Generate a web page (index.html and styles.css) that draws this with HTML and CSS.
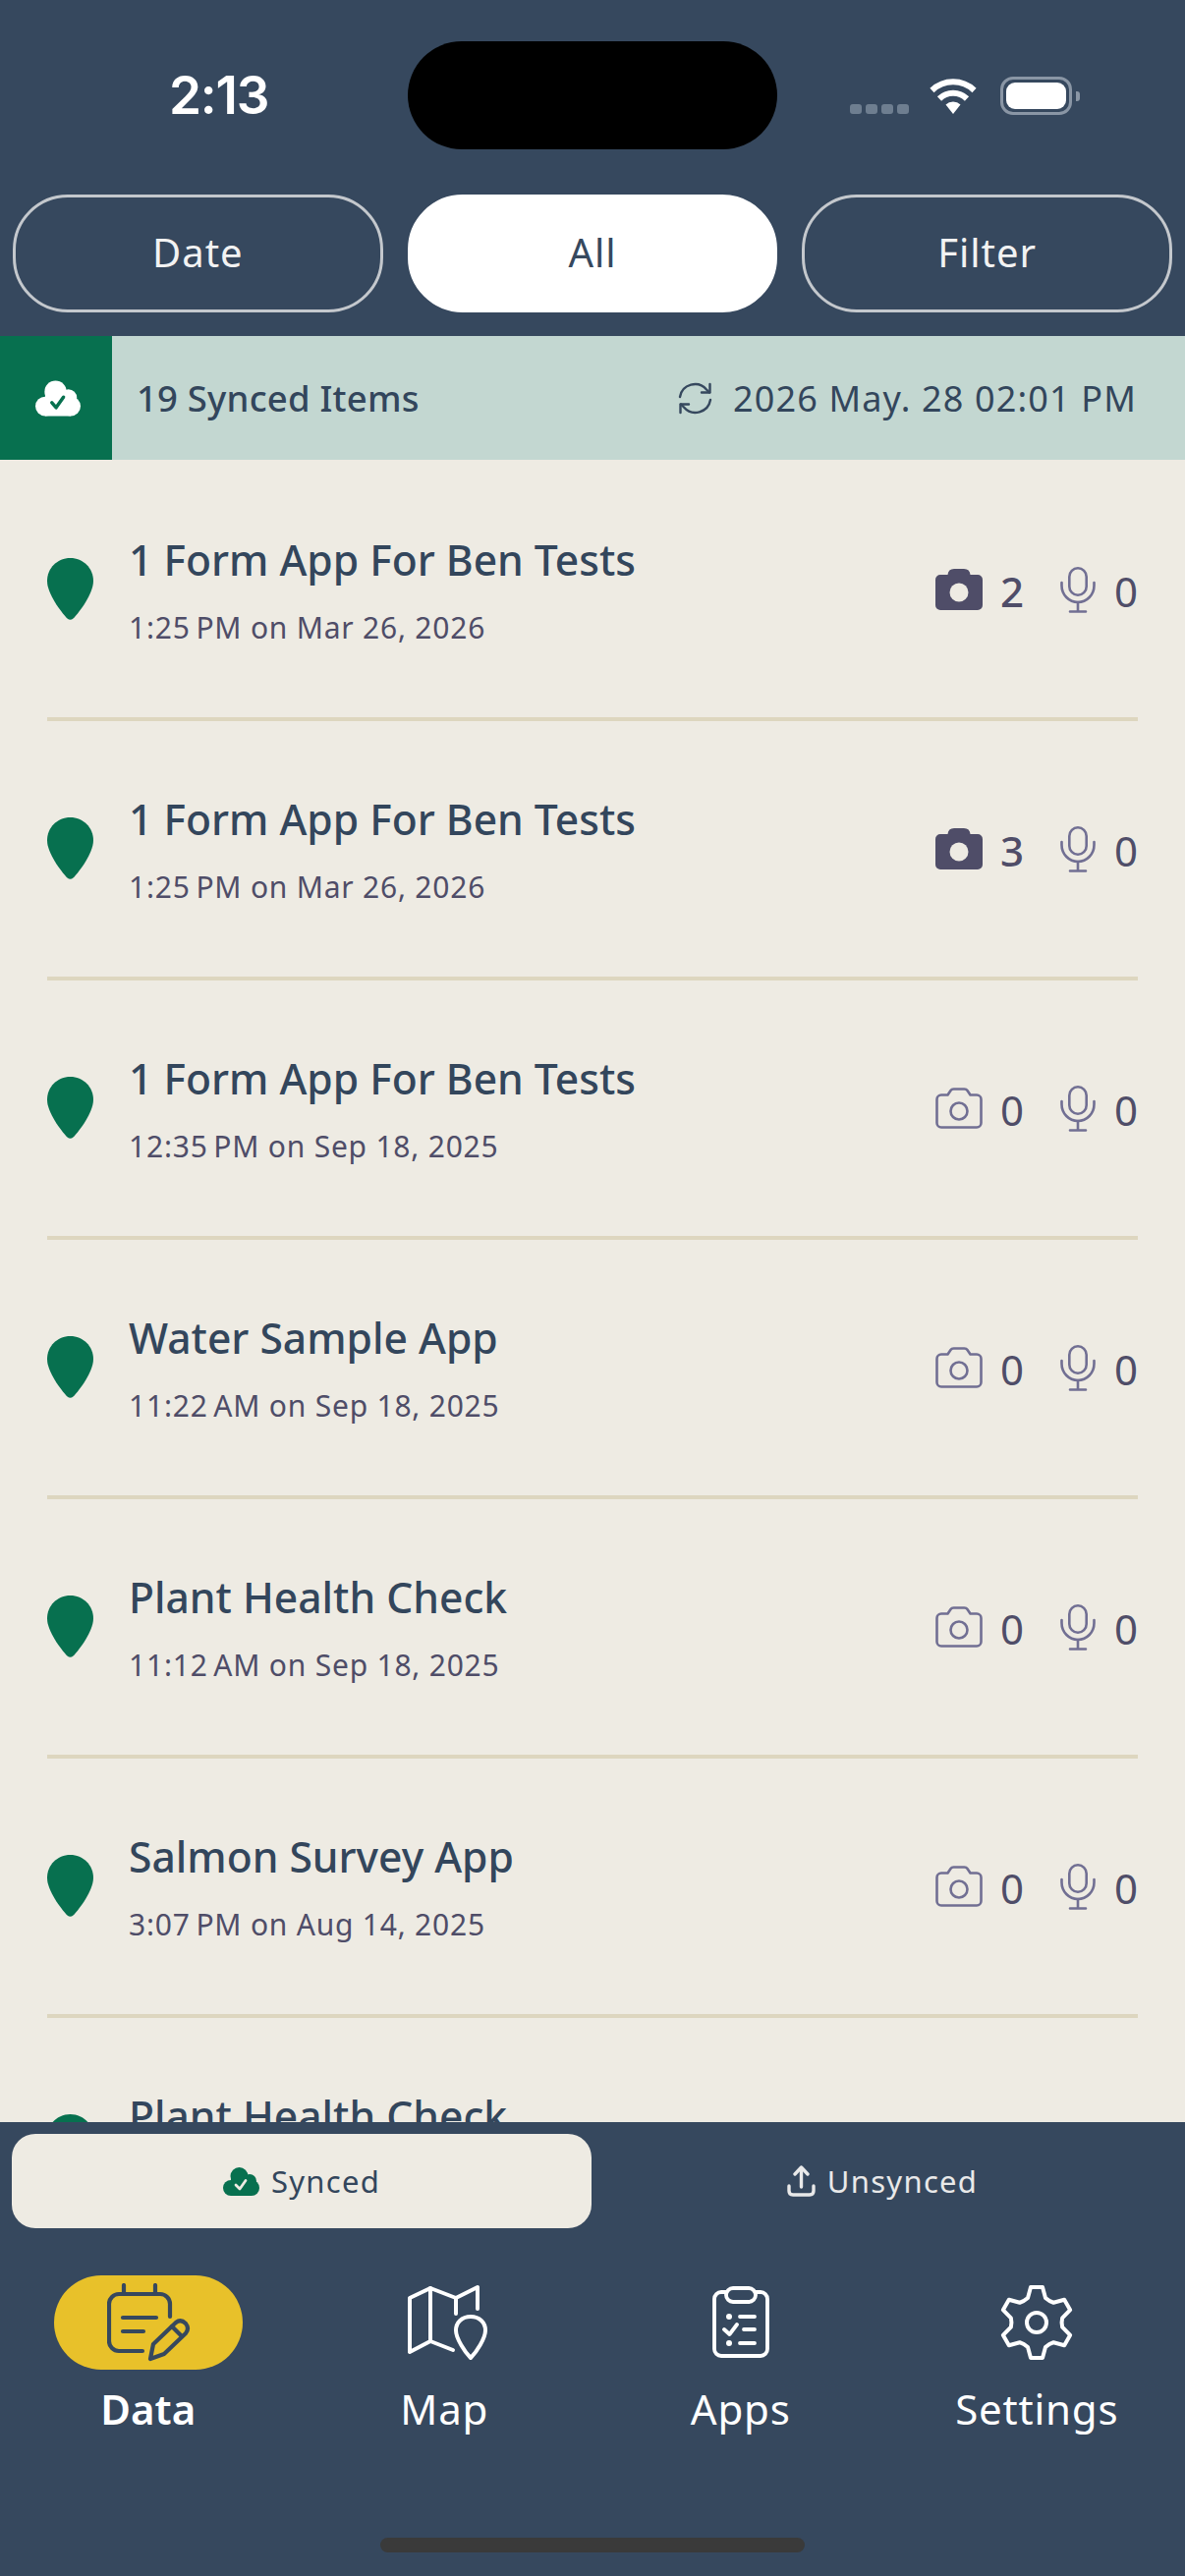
FILE: index.html
```html
<!DOCTYPE html>
<html lang="en">
<head>
    <meta charset="UTF-8">
    <meta name="viewport" content="width=device-width, initial-scale=1.0">
    <title>Data</title>
    <link rel="stylesheet" href="styles.css">
</head>
<body>

<!-- Icons used more than once -->
<svg class="icon-defs" width="0" height="0">
    <symbol id="pin" viewBox="0 0 47 63">
        <path d="M23.5 0C36.5 0 47 10 47 23.5C47 36 33 55 26.5 61.5Q23.5 64 20.5 61.5C14 55 0 36 0 23.5C0 10 10.5 0 23.5 0Z" fill="#07704f"/>
    </symbol>
    <symbol id="camera-full" viewBox="0 0 48 42">
        <path d="M5 6H12.5Q13 0 19 0H29Q35 0 35.500 6H43A5 5 0 0 1 48 11V37A5 5 0 0 1 43 42H5A5 5 0 0 1 0 37V11A5 5 0 0 1 5 6Z" fill="#4f4d68"/>
        <circle cx="24" cy="24" r="9.500" fill="#eeebe3"/>
    </symbol>
    <symbol id="camera-empty" viewBox="0 0 48 42">
        <path d="M12.500 7.500L15.500 3Q16.500 1.500 18.500 1.500H29.500Q31.500 1.500 32.500 3L35.500 7.500H42A4.500 4.500 0 0 1 46.500 12V36A4.500 4.500 0 0 1 42 40.500H6A4.500 4.500 0 0 1 1.500 36V12A4.500 4.500 0 0 1 6 7.500Z" fill="none" stroke="#716f93" stroke-width="2.600" stroke-linejoin="round"/>
        <circle cx="24" cy="24" r="8.500" fill="none" stroke="#716f93" stroke-width="2.600"/>
    </symbol>
    <symbol id="mic" viewBox="0 0 36 47">
        <g fill="none" stroke="#716f93" stroke-width="2.600" stroke-linecap="round">
            <rect x="9.300" y="1.300" width="17.400" height="27.400" rx="8.700"/>
            <path d="M1.500 16V19A16.500 17 0 0 0 34.500 19V16"/>
            <path d="M18 36V45.500M10 45.500H26"/>
        </g>
    </symbol>
</svg>

<!-- Top part -->
<header class="top-bar">
    <div class="status-row">
        <div class="status-time">2:13</div>
        <div class="island"></div>
        <div class="status-icons">
            <div class="signal"><span></span><span></span><span></span><span></span></div>
            <svg class="wifi" viewBox="0 0 50 37">
                <g fill="none" stroke="#fff" stroke-width="6">
                    <path d="M3.500 13A31 31 0 0 1 46.500 13"/>
                    <path d="M11 21.500A20 20 0 0 1 39 21.500"/>
                </g>
                <path d="M17.500 27.500A11 11 0 0 1 32.500 27.500L25 37Z" fill="#fff"/>
            </svg>
            <div class="battery"><div class="battery-fill"></div></div>
            <div class="battery-nub"></div>
        </div>
    </div>
    <div class="filter-row">
        <button class="filter-button">Date</button>
        <button class="filter-button active">All</button>
        <button class="filter-button">Filter</button>
    </div>
</header>

<!-- Sync info -->
<div class="sync-bar">
    <div class="sync-badge">
        <svg class="cloud-large" viewBox="0 0 37 29">
            <g fill="#fff">
                <circle cx="16.500" cy="9" r="9"/><circle cx="27" cy="14" r="7"/><circle cx="8" cy="21" r="8"/><circle cx="29" cy="21" r="8"/><rect x="8" y="12" width="21" height="17"/>
            </g>
            <path d="M13.500 18L17 22L23 13.500" fill="none" stroke="#07704f" stroke-width="2.800" stroke-linecap="round" stroke-linejoin="round"/>
        </svg>
    </div>
    <div class="sync-count">19 Synced Items</div>
    <svg class="sync-icon" viewBox="0 0 35 33">
        <g fill="none" stroke="#36485e" stroke-width="2.400" stroke-linecap="round" stroke-linejoin="round">
            <path d="M2 15A15.500 15.500 0 0 1 29 7.500L32 10.500"/>
            <path d="M32.500 2V10.500H24"/>
            <path d="M33 18A15.500 15.500 0 0 1 6 25.500L3 22.500"/>
            <path d="M2.500 31V22.500H11"/>
        </g>
    </svg>
    <div class="sync-date">2026 May. 28 02:01 PM</div>
</div>

<!-- List of records -->
<main class="record-list">
    <div class="record">
        <svg class="record-pin"><use href="#pin"/></svg>
        <div class="record-text">
            <div class="record-title">1 Form App For Ben Tests</div>
            <div class="record-date">1:25&#8239;PM on Mar 26, 2026</div>
        </div>
        <div class="record-stats">
            <svg class="stat-camera"><use href="#camera-full"/></svg>
            <span class="stat-count strong">2</span>
            <svg class="stat-mic"><use href="#mic"/></svg>
            <span class="stat-count">0</span>
        </div>
    </div>
    <div class="record">
        <svg class="record-pin"><use href="#pin"/></svg>
        <div class="record-text">
            <div class="record-title">1 Form App For Ben Tests</div>
            <div class="record-date">1:25&#8239;PM on Mar 26, 2026</div>
        </div>
        <div class="record-stats">
            <svg class="stat-camera"><use href="#camera-full"/></svg>
            <span class="stat-count strong">3</span>
            <svg class="stat-mic"><use href="#mic"/></svg>
            <span class="stat-count">0</span>
        </div>
    </div>
    <div class="record">
        <svg class="record-pin"><use href="#pin"/></svg>
        <div class="record-text">
            <div class="record-title">1 Form App For Ben Tests</div>
            <div class="record-date">12:35&#8239;PM on Sep 18, 2025</div>
        </div>
        <div class="record-stats">
            <svg class="stat-camera"><use href="#camera-empty"/></svg>
            <span class="stat-count">0</span>
            <svg class="stat-mic"><use href="#mic"/></svg>
            <span class="stat-count">0</span>
        </div>
    </div>
    <div class="record">
        <svg class="record-pin"><use href="#pin"/></svg>
        <div class="record-text">
            <div class="record-title">Water Sample App</div>
            <div class="record-date">11:22&#8239;AM on Sep 18, 2025</div>
        </div>
        <div class="record-stats">
            <svg class="stat-camera"><use href="#camera-empty"/></svg>
            <span class="stat-count">0</span>
            <svg class="stat-mic"><use href="#mic"/></svg>
            <span class="stat-count">0</span>
        </div>
    </div>
    <div class="record">
        <svg class="record-pin"><use href="#pin"/></svg>
        <div class="record-text">
            <div class="record-title">Plant Health Check</div>
            <div class="record-date">11:12&#8239;AM on Sep 18, 2025</div>
        </div>
        <div class="record-stats">
            <svg class="stat-camera"><use href="#camera-empty"/></svg>
            <span class="stat-count">0</span>
            <svg class="stat-mic"><use href="#mic"/></svg>
            <span class="stat-count">0</span>
        </div>
    </div>
    <div class="record">
        <svg class="record-pin"><use href="#pin"/></svg>
        <div class="record-text">
            <div class="record-title">Salmon Survey App</div>
            <div class="record-date">3:07&#8239;PM on Aug 14, 2025</div>
        </div>
        <div class="record-stats">
            <svg class="stat-camera"><use href="#camera-empty"/></svg>
            <span class="stat-count">0</span>
            <svg class="stat-mic"><use href="#mic"/></svg>
            <span class="stat-count">0</span>
        </div>
    </div>
    <!-- Only the top of this one shows above the bottom bar -->
    <div class="record">
        <svg class="record-pin"><use href="#pin"/></svg>
        <div class="record-text">
            <div class="record-title">Plant Health Check</div>
            <div class="record-date"></div>
        </div>
    </div>
</main>

<!-- Bottom part -->
<footer class="bottom-bar">
    <div class="tab-row">
        <div class="tab active">
            <svg class="cloud-small" viewBox="0 0 37 29">
                <g fill="#07704f">
                    <circle cx="16.500" cy="9" r="9"/><circle cx="27" cy="14" r="7"/><circle cx="8" cy="21" r="8"/><circle cx="29" cy="21" r="8"/><rect x="8" y="12" width="21" height="17"/>
                </g>
                <path d="M13 18L17 22L23 13.500" fill="none" stroke="#eeebe3" stroke-width="2.800" stroke-linecap="round" stroke-linejoin="round"/>
            </svg>
            <span>Synced</span>
        </div>
        <div class="tab">
            <svg class="upload-icon" viewBox="0 0 29 32">
                <g fill="none" stroke="#e9e9e9" stroke-width="3.400" stroke-linecap="round" stroke-linejoin="round">
                    <path d="M14.500 2.500V22"/>
                    <path d="M8 9L14.500 2L21 9"/>
                    <path d="M2 21V26Q2 30 6 30H23Q27 30 27 26V21"/>
                </g>
            </svg>
            <span>Unsynced</span>
        </div>
    </div>

    <nav class="nav-row">
        <div class="nav-item active">
            <div class="nav-icon">
                <svg class="icon-data" viewBox="-2 -2 85 80">
                    <g fill="none" stroke="#36485e" stroke-width="4.200" stroke-linecap="round" stroke-linejoin="round">
                        <path d="M62 32V19A10 10 0 0 0 52 9H10A10 10 0 0 0 0 19V57A10 10 0 0 0 10 67H34"/>
                        <path d="M15 0V9M47 0V9M14 33H48M14 47H35"/>
                        <path d="M42 75L45 60L68 38Q73 34 78 39Q82 44 78 49L56 70Z"/>
                        <path d="M64 42L74 52"/>
                    </g>
                </svg>
            </div>
            <div class="nav-label">Data</div>
        </div>
        <div class="nav-item">
            <div class="nav-icon">
                <svg class="icon-map" viewBox="-2 -2 83 78">
                    <g fill="none" stroke="#fff" stroke-width="4" stroke-linecap="round" stroke-linejoin="round">
                        <path d="M45 65L22 56L1 67V12L22 2L48 12L70 1V23"/>
                        <path d="M22 2V56M48 12V28"/>
                        <path d="M63 31C72 31 78 37 78 45C78 53 69 67 63 73C57 67 48 53 48 45C48 37 54 31 63 31Z"/>
                    </g>
                </svg>
            </div>
            <div class="nav-label">Map</div>
        </div>
        <div class="nav-item">
            <div class="nav-icon">
                <svg class="icon-apps" viewBox="-2 -2 58 75">
                    <g fill="none" stroke="#fff" stroke-width="3.800" stroke-linecap="round" stroke-linejoin="round">
                        <path d="M12 4H7A7 7 0 0 0 0 11V62A7 7 0 0 0 7 69H47A7 7 0 0 0 54 62V11A7 7 0 0 0 47 4H42"/>
                        <rect x="12" y="0" width="30" height="14" rx="7"/>
                        <path d="M26 29H41M30 42H41M26 56H41M10 42L15.500 47L23 37"/>
                    </g>
                    <circle cx="15" cy="29" r="3" fill="#fff"/>
                    <circle cx="15" cy="56" r="3" fill="#fff"/>
                </svg>
            </div>
            <div class="nav-label">Apps</div>
        </div>
        <div class="nav-item">
            <div class="nav-icon">
                <svg class="icon-settings" viewBox="-38 -40 76 80">
                    <g fill="none" stroke="#fff" stroke-width="4" stroke-linejoin="round">
                        <path d="M-9 -25L-6 -36H6L9 -25Q13 -21.500 17.150 -20.290L28.180 -23.200L34.180 -12.800L26.150 -4.710Q25 0 26.150 4.710L34.180 12.800L28.180 23.200L17.150 20.290Q13 21.500 9 25L6 36H-6L-9 25Q-13 21.500 -17.150 20.290L-28.180 23.200L-34.180 12.800L-26.150 4.710Q-25 0 -26.150 -4.710L-34.180 -12.800L-28.180 -23.200L-17.150 -20.290Q-13 -21.500 -9 -25Z"/>
                        <circle cx="0" cy="0" r="10"/>
                    </g>
                </svg>
            </div>
            <div class="nav-label">Settings</div>
        </div>
    </nav>

    <div class="home-indicator"></div>
</footer>

</body>
</html>
```

FILE: styles.css
```css
/* General page */
* {
    box-sizing: border-box;
}

body {
    margin: 0;
    width: 1206px;
    height: 2622px;
    overflow: hidden;
    display: flex;
    flex-direction: column;
    background-color: #eeebe3;
    font-family: 'Noto Sans', sans-serif;
    color: #33465c;
}

.icon-defs {
    position: absolute;
}

/* Top part */
.top-bar {
    height: 342px;
    padding-top: 42px;
    background-color: #36485e;
}

.status-row {
    display: grid;
    grid-template-columns: 415px 376px 1fr;
    height: 110px;
}

.status-time {
    padding-left: 172px;
    padding-top: 25px;
    font-family: Inter, sans-serif;
    font-size: 53px;
    font-weight: 600;
    line-height: 60px;
    letter-spacing: -1.2px;
    color: #fff;
}

.island {
    background-color: #000;
    border-radius: 55px;
}

.status-icons {
    display: flex;
    padding-left: 74px;
    padding-top: 36px;
    align-items: flex-start;
}

.signal {
    display: flex;
    gap: 4px;
    margin-top: 28px;
    margin-right: 20px;
}

.signal span {
    width: 12px;
    height: 10px;
    border-radius: 3px;
    background-color: #6e7e90;
}

.wifi {
    width: 50px;
    height: 37px;
    margin-top: 1px;
    margin-right: 23px;
}

.battery {
    width: 73px;
    height: 39px;
    padding: 3px;
    border: 3px solid #8a96a5;
    border-radius: 13px;
}

.battery-fill {
    height: 100%;
    background-color: #fff;
    border-radius: 9px;
}

.battery-nub {
    width: 4px;
    height: 10px;
    margin: 15px 0 0 4px;
    background-color: #8a96a5;
    border-radius: 0 3px 3px 0;
}

.filter-row {
    display: grid;
    grid-template-columns: repeat(3, 1fr);
    gap: 25px;
    padding: 0 13px;
    margin-top: 46px;
}

.filter-button {
    height: 120px;
    padding-bottom: 5px;
    background-color: transparent;
    border: 3px solid #c4c8cd;
    border-radius: 56px;
    color: #f2f2f2;
    font-family: 'Noto Sans', sans-serif;
    font-size: 40px;
    letter-spacing: 1px;
}

.filter-button.active {
    background-color: #fff;
    border-color: #fff;
    color: #36485e;
}

/* Sync info */
.sync-bar {
    display: flex;
    align-items: center;
    height: 126px;
    background-color: #c3d7d1;
}

.sync-badge {
    display: flex;
    align-items: center;
    justify-content: center;
    width: 114px;
    height: 100%;
    padding-left: 4px;
    background-color: #07704f;
}

.cloud-large {
    width: 46px;
    height: 37px;
}

.sync-count {
    margin-left: 25px;
    font-size: 36.500px;
    font-weight: 500;
    letter-spacing: 0.200px;
}

.sync-icon {
    width: 35px;
    height: 33px;
    margin-left: auto;
}

.sync-date {
    margin-left: 21px;
    margin-right: 49px;
    font-size: 36px;
    letter-spacing: 1.150px;
}

/* List of records */
.record-list {
    flex: 1;
    overflow: hidden;
    padding: 2px 48px 0;
}

.record {
    display: flex;
    align-items: center;
    height: 264px;
    border-bottom: 4px solid #ddd6bf;
}

.record-pin {
    width: 47px;
    height: 63px;
    margin-top: -1px;
    flex-shrink: 0;
}

.record-text {
    margin-left: 36px;
    margin-top: 2px;
}

.record-title {
    font-size: 42.600px;
    font-weight: 500;
    line-height: 54px;
}

.record-date {
    min-height: 42px;
    margin-top: 22px;
    font-size: 30px;
    line-height: 42px;
    letter-spacing: 0.780px;
    color: #4f4d68;
}

.record-stats {
    display: flex;
    align-items: center;
    margin-left: auto;
    color: #4f4d68;
}

.stat-camera {
    width: 48px;
    height: 42px;
    margin-right: -1px;
}

.stat-mic {
    width: 36px;
    height: 47px;
    margin-left: 37px;
}

.stat-count {
    width: 24px;
    margin-left: 19px;
    padding-top: 4px;
    font-size: 42px;
    line-height: 50px;
}

.stat-count.strong {
    font-weight: 500;
}

/* Bottom part */
.bottom-bar {
    display: flex;
    flex-direction: column;
    height: 462px;
    background-color: #36485e;
}

.tab-row {
    display: grid;
    grid-template-columns: 590px 1fr;
    padding: 12px 12px 0;
}

.tab {
    display: flex;
    align-items: center;
    justify-content: center;
    gap: 12px;
    height: 96px;
    border-radius: 24px;
    font-size: 31px;
    letter-spacing: 1.300px;
    color: #e9e9e9;
}

.tab.active {
    background-color: #eeebe3;
    color: #33465c;
}

.cloud-small {
    width: 37px;
    height: 29px;
}

.upload-icon {
    width: 29px;
    height: 32px;
}

.nav-row {
    display: grid;
    grid-template-columns: repeat(4, 1fr);
    margin-top: 48px;
}

.nav-item {
    display: flex;
    flex-direction: column;
    align-items: center;
    color: #fff;
}

.nav-icon {
    display: flex;
    align-items: center;
    justify-content: center;
    width: 192px;
    height: 96px;
    border-radius: 48px;
}

.nav-item.active .nav-icon {
    background-color: #e8c12a;
}

.icon-data {
    width: 85px;
    height: 80px;
    margin-left: 2px;
}

.icon-map {
    width: 83px;
    height: 78px;
    margin-left: 6px;
}

.icon-apps {
    width: 58px;
    height: 75px;
}

.icon-settings {
    width: 76px;
    height: 80px;
}

.nav-label {
    margin-top: 12px;
    font-size: 42px;
    line-height: 56px;
    letter-spacing: 0.800px;
}

.nav-item.active .nav-label {
    font-weight: 600;
    letter-spacing: 0;
}

.home-indicator {
    width: 432px;
    height: 15px;
    margin: auto auto 24px;
    background-color: #3a3a3a;
    border-radius: 8px;
}
```
